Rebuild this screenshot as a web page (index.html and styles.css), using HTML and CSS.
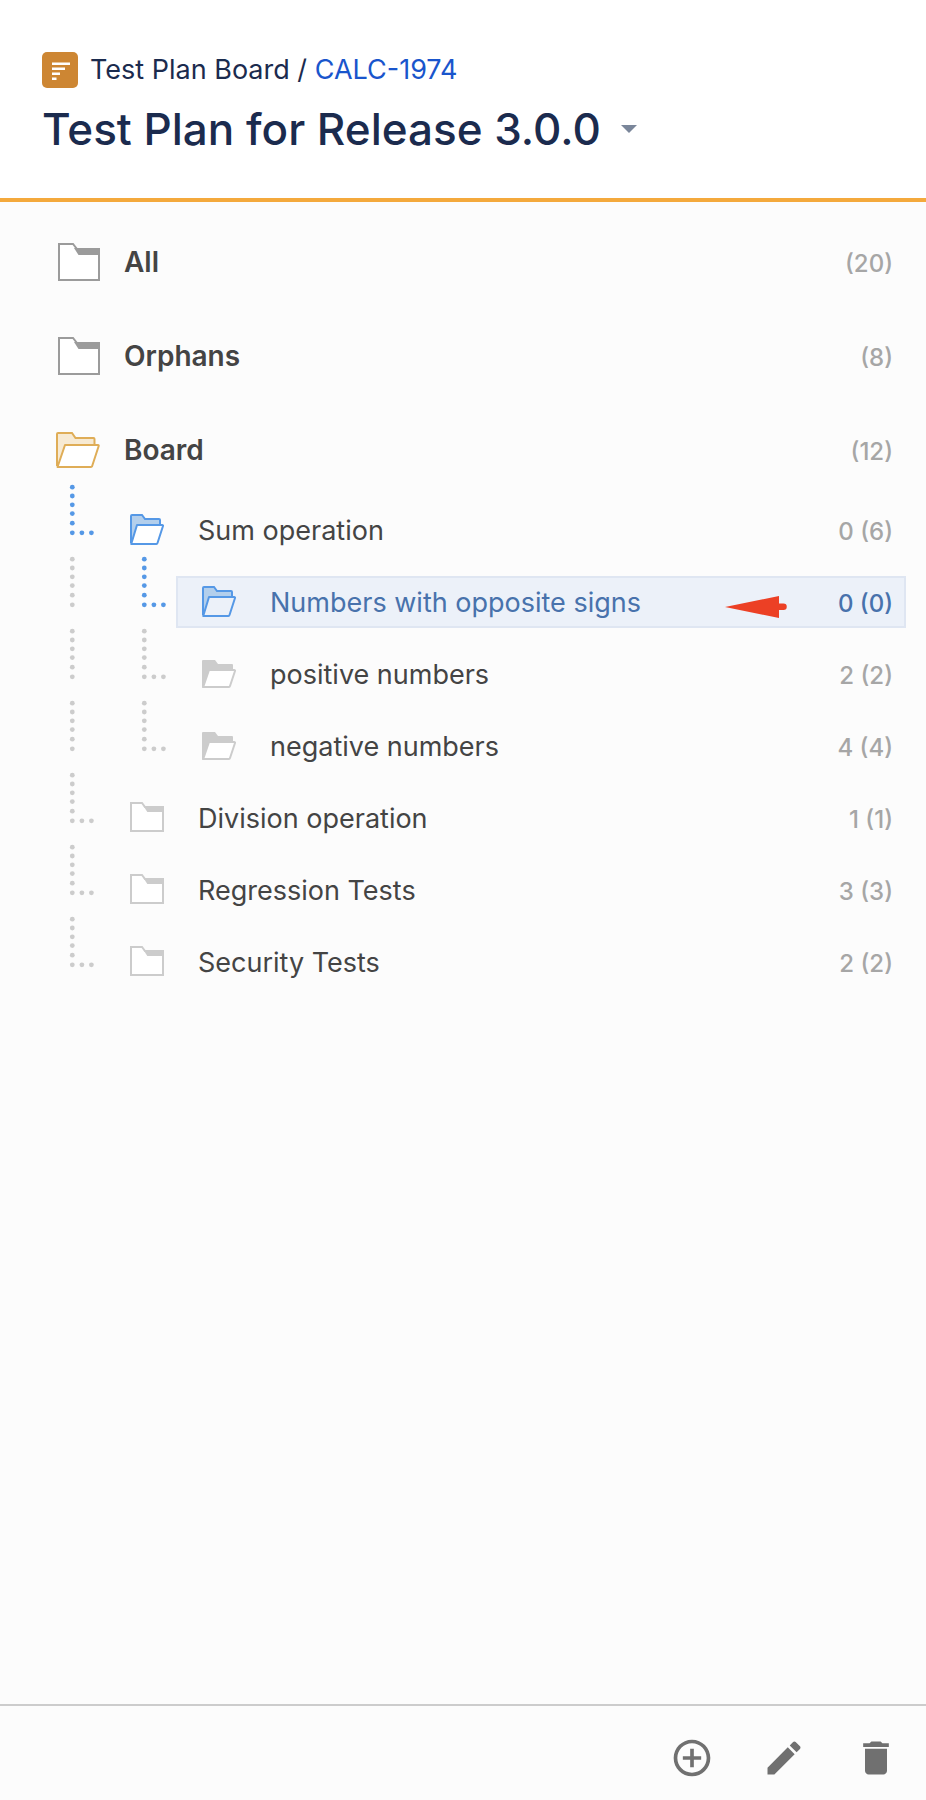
FILE: index.html
```html
<!DOCTYPE html>
<html lang="en">
<head>
<meta charset="utf-8">
<meta name="viewport" content="width=device-width, initial-scale=1">
<title>Test Plan for Release 3.0.0</title>
<link rel="stylesheet" href="styles.css">
</head>
<body>
<svg class="sprite" aria-hidden="true">
  <symbol id="folder-lg" viewBox="0 0 44 40">
    <path d="M3 2H17L21 7H43V38H3Z" fill="#fff" stroke="#9b9b9b" stroke-width="2"/>
    <path d="M18 6H43V13H22.5Z" fill="#9b9b9b"/>
  </symbol>
  <symbol id="open-lg" viewBox="0 0 44 40">
    <path d="M1 36V4Q1 3 2 3H16L19.500 8H37.500Q38.500 8 38.500 9V15" fill="#f7ead3" stroke="#dfad57" stroke-width="2"/>
    <path d="M1.500 37L9 15H42Q43 15 42.700 16L36 36.500Q35.800 37 35 37Z" fill="#fff" stroke="#dfad57" stroke-width="2" stroke-linejoin="round"/>
  </symbol>
  <symbol id="folder-sm" viewBox="0 0 34 32">
    <path d="M1 1H12L15 5H33V29H1Z" fill="#fff" stroke="#ccc" stroke-width="2"/>
    <path d="M13.500 4H33V10H17.300Z" fill="#ccc"/>
  </symbol>
  <symbol id="open-blue" viewBox="0 0 34 32">
    <path d="M1 29V2Q1 1 2 1H12L15 5H29Q30 5 30 6V11" fill="#b3cfec" stroke="#5598e6" stroke-width="2"/>
    <path d="M1.200 30L7 11H32.200Q33.200 11 33 12L27.500 29Q27.200 30 26.500 30Z" fill="currentColor" stroke="#5598e6" stroke-width="2" stroke-linejoin="round"/>
  </symbol>
  <symbol id="open-grey" viewBox="0 0 34 32">
    <path d="M0 29V3Q0 2 1 2H13L16 6H30Q31 6 31 7V12L2 30H1Q0 30 0 29Z" fill="#ccc"/>
    <path d="M1.200 29L7 12H32.200Q33.200 12 33 13L28 28Q27.700 29 27 29Z" fill="#fff" stroke="#ccc" stroke-width="2" stroke-linejoin="round"/>
  </symbol>
  <symbol id="guide-line" viewBox="0 0 72 52">
    <g fill="currentColor"><circle cx="40.300" cy="3.200" r="2.400"/><circle cx="40.300" cy="12" r="2.400"/><circle cx="40.300" cy="20.800" r="2.400"/><circle cx="40.300" cy="29.600" r="2.400"/><circle cx="40.300" cy="39.200" r="2.400"/><circle cx="40.300" cy="48.800" r="2.400"/></g>
  </symbol>
  <symbol id="guide-elbow" viewBox="0 0 72 52">
    <use href="#guide-line" width="72" height="52"/>
    <g fill="currentColor"><circle cx="49.900" cy="48.800" r="2.400"/><circle cx="59.400" cy="48.800" r="2.400"/></g>
  </symbol>
</svg>

<header class="header">
  <nav class="crumbs" aria-label="Breadcrumb">
    <svg class="board-icon" viewBox="0 0 36 36" aria-hidden="true">
      <rect width="36" height="36" rx="5" fill="#cd8633"/>
      <path d="M10 10.500h18v2.500H10zM10 15.500h13v2.500H10zM10 20.500h8v2.500h-8zM10 25.500h4.500v2.500H10z" fill="#fff"/>
    </svg>
    <span>Test Plan Board / <a class="issue" href="#calc-1974">CALC-1974</a></span>
  </nav>
  <div class="heading">
    <h1 class="title">Test Plan for Release 3.0.0</h1>
    <button class="caret" type="button" aria-label="Change test plan"><svg viewBox="0 0 16 8"><path d="M0 0H16L8 8Z" fill="#7a869a"/></svg></button>
  </div>
</header>

<main class="tree">
  <ul class="roots">
    <li><button class="node root" type="button"><svg class="icon"><use href="#folder-lg"/></svg><span class="label">All</span><span class="count">(20)</span></button></li>
    <li><button class="node root" type="button"><svg class="icon"><use href="#folder-lg"/></svg><span class="label">Orphans</span><span class="count">(8)</span></button></li>
    <li>
      <button class="node root" type="button"><svg class="icon"><use href="#open-lg"/></svg><span class="label">Board</span><span class="count">(12)</span></button>
      <ul class="branch">
        <li class="row"><svg class="guide active"><use href="#guide-elbow"/></svg><button class="node" type="button"><svg class="icon"><use href="#open-blue"/></svg><span class="label">Sum operation</span><span class="count">0 (6)</span></button></li>
        <li>
          <ul class="branch">
            <li class="row"><svg class="guide"><use href="#guide-line"/></svg><svg class="guide active"><use href="#guide-elbow"/></svg><button class="node selected" type="button"><svg class="icon"><use href="#open-blue"/></svg><span class="label">Numbers with opposite signs</span><span class="count">0 (0)</span><svg class="pointer" viewBox="0 0 62 22" aria-hidden="true"><path d="M0 11L54 0V7.500H58.500A3.250 3.250 0 0 1 58.500 14H54V22Z" fill="#ec4025"/></svg></button></li>
            <li class="row"><svg class="guide"><use href="#guide-line"/></svg><svg class="guide"><use href="#guide-elbow"/></svg><button class="node" type="button"><svg class="icon"><use href="#open-grey"/></svg><span class="label">positive numbers</span><span class="count">2 (2)</span></button></li>
            <li class="row"><svg class="guide"><use href="#guide-line"/></svg><svg class="guide"><use href="#guide-elbow"/></svg><button class="node" type="button"><svg class="icon"><use href="#open-grey"/></svg><span class="label">negative numbers</span><span class="count">4 (4)</span></button></li>
          </ul>
        </li>
        <li class="row"><svg class="guide"><use href="#guide-elbow"/></svg><button class="node" type="button"><svg class="icon"><use href="#folder-sm"/></svg><span class="label">Division operation</span><span class="count">1 (1)</span></button></li>
        <li class="row"><svg class="guide"><use href="#guide-elbow"/></svg><button class="node" type="button"><svg class="icon"><use href="#folder-sm"/></svg><span class="label">Regression Tests</span><span class="count">3 (3)</span></button></li>
        <li class="row"><svg class="guide"><use href="#guide-elbow"/></svg><button class="node" type="button"><svg class="icon"><use href="#folder-sm"/></svg><span class="label">Security Tests</span><span class="count">2 (2)</span></button></li>
      </ul>
    </li>
  </ul>
</main>

<footer class="toolbar">
  <button class="tool" type="button" aria-label="Add"><svg viewBox="0 0 24 24"><path d="M13 7h-2v4H7v2h4v4h2v-4h4v-2h-4V7zm-1-5C6.480 2 2 6.480 2 12s4.480 10 10 10 10-4.480 10-10S17.520 2 12 2zm0 18c-4.410 0-8-3.590-8-8s3.590-8 8-8 8 3.590 8 8-3.590 8-8 8z"/></svg></button>
  <button class="tool" type="button" aria-label="Edit"><svg viewBox="0 0 24 24"><path d="M3 17.250V21h3.750L17.810 9.940l-3.750-3.750L3 17.250zM20.710 7.040c.39-.39.39-1.020 0-1.410l-2.340-2.340c-.39-.39-1.020-.39-1.410 0l-1.830 1.830 3.750 3.750 1.830-1.830z"/></svg></button>
  <button class="tool" type="button" aria-label="Delete"><svg viewBox="0 0 24 24"><path d="M6 19c0 1.100.9 2 2 2h8c1.100 0 2-.9 2-2V7H6v12zM19 4h-3.500l-1-1h-5l-1 1H5v2h14V4z"/></svg></button>
</footer>
</body>
</html>
```
FILE: styles.css
```css
* { box-sizing: border-box; }

body {
  margin: 0;
  min-height: 100vh;
  display: flex;
  flex-direction: column;
  background: #fcfcfc;
  color: #444;
  font-family: Inter, "Liberation Sans", sans-serif;
  font-size: 27px;
}

ul { list-style: none; margin: 0; padding: 0; }

button {
  margin: 0;
  padding: 0;
  border: 0;
  background: none;
  color: inherit;
  font: inherit;
  text-align: left;
  cursor: pointer;
}

svg { display: block; flex: none; }

.sprite { position: absolute; width: 0; height: 0; }

.header {
  padding: 48px 42px 40px;
  background: #fff;
  border-bottom: 4px solid #f4a93c;
  color: #1b2b4e;
}

.crumbs {
  display: flex;
  align-items: center;
  gap: 12px;
  line-height: 44px;
}

.board-icon { width: 36px; height: 36px; }

.issue { color: #1955cc; text-decoration: none; }

.heading {
  display: flex;
  align-items: center;
  gap: 20px;
  margin-top: 8px;
}

.title {
  margin: 0;
  font-size: 44px;
  font-weight: 500;
  line-height: 58px;
}

.caret svg { width: 16px; height: 8px; }

.tree {
  flex: 1;
  padding: 16px 20px 16px 32px;
}

.roots { display: grid; gap: 6px; }

.row { display: flex; align-items: center; height: 72px; }

.guide {
  width: 72px;
  height: 52px;
  align-self: flex-start;
  margin-top: -10px;
  color: #ccc;
}

.guide.active { color: #5598e6; }

.node {
  position: relative;
  flex: 1;
  display: flex;
  align-items: center;
  gap: 34px;
  height: 52px;
  padding: 0 11px 0 24px;
  border: 2px solid transparent;
}

.icon { width: 34px; height: 32px; color: #fff; }

.label { flex: 1; white-space: nowrap; }

.count { padding-top: 2px; color: #a6a6a6; font-size: 24px; font-weight: 500; }

.root {
  width: 100%;
  height: 88px;
  gap: 24px;
  padding-left: 22px;
}

.root .icon { width: 44px; height: 40px; }

.root .label { font-size: 28px; font-weight: 600; }

.selected {
  background: #ecf1f9;
  border-color: #dfe6f2;
  color: #4872ac;
}

.selected .icon { color: #ecf1f9; }

.selected .count { color: #4872ac; }

.pointer {
  position: absolute;
  top: 18px;
  right: 117px;
  width: 62px;
  height: 22px;
}

.toolbar {
  display: flex;
  justify-content: flex-end;
  gap: 48px;
  padding: 30px 28px 20px;
  border-top: 2px solid #ccc;
}

.tool svg { width: 44px; height: 44px; fill: #707070; }
```
